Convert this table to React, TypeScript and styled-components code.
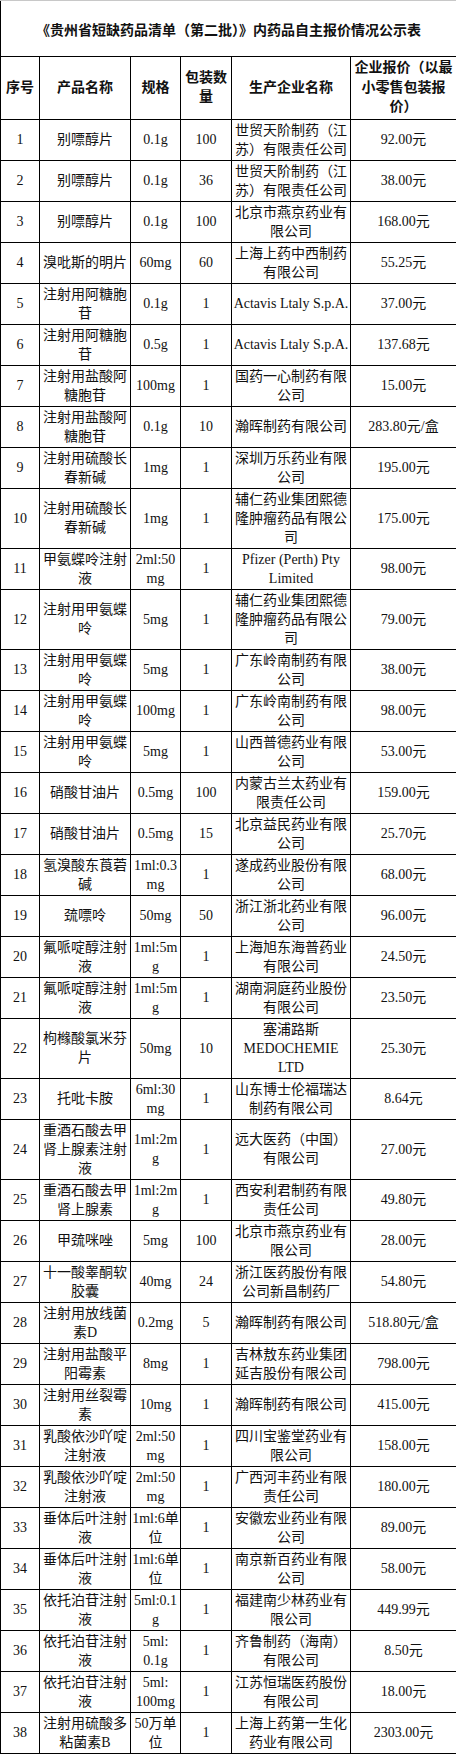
import styled, { createGlobalStyle } from 'styled-components';

const GlobalStyle = createGlobalStyle`
  html, body {
    margin: 0;
    padding: 0;
    background: #fff;
  }
  body {
    font-family: "Liberation Serif", "Noto Sans CJK SC", serif;
    color: #111;
  }
`;

const Sheet = styled.table`
  width: 456px;
  border-collapse: collapse;
  table-layout: fixed;
  border: 1px solid #000;
`;

const TitleCell = styled.th`
  border: 1px solid #000;
  border-top-color: #c8c8c8;
  padding: 19px 0 17px;
  font-family: "Noto Sans CJK SC", sans-serif;
  font-size: 14px;
  font-weight: bold;
  line-height: 19px;
  text-align: center;
`;

const HeadCell = styled.th`
  border: 1px solid #000;
  padding: 1px 1px 2px;
  font-family: "Liberation Serif", "Noto Sans CJK SC", serif;
  font-size: 14px;
  font-weight: bold;
  line-height: 19.5px;
  text-align: center;
  vertical-align: middle;
`;

const BodyCell = styled.td<{ $wrapAnywhere?: boolean }>`
  border: 1px solid #000;
  padding: 1px;
  font-size: 14px;
  line-height: 19px;
  text-align: center;
  vertical-align: middle;
  overflow-wrap: ${(p) => (p.$wrapAnywhere ? 'anywhere' : 'normal')};
`;

const widths = [39, 91, 50, 51, 119, 106];

const headers = ['序号', '产品名称', '规格', '包装数量', '生产企业名称', '企业报价（以最小零售包装报价）'];

const rows: string[][] = [
  ['1', '别嘌醇片', '0.1g', '100', '世贸天阶制药（江苏）有限责任公司', '92.00元'],
  ['2', '别嘌醇片', '0.1g', '36', '世贸天阶制药（江苏）有限责任公司', '38.00元'],
  ['3', '别嘌醇片', '0.1g', '100', '北京市燕京药业有限公司', '168.00元'],
  ['4', '溴吡斯的明片', '60mg', '60', '上海上药中西制药有限公司', '55.25元'],
  ['5', '注射用阿糖胞苷', '0.1g', '1', 'Actavis Ltaly S.p.A.', '37.00元'],
  ['6', '注射用阿糖胞苷', '0.5g', '1', 'Actavis Ltaly S.p.A.', '137.68元'],
  ['7', '注射用盐酸阿糖胞苷', '100mg', '1', '国药一心制药有限公司', '15.00元'],
  ['8', '注射用盐酸阿糖胞苷', '0.1g', '10', '瀚晖制药有限公司', '283.80元/盒'],
  ['9', '注射用硫酸长春新碱', '1mg', '1', '深圳万乐药业有限公司', '195.00元'],
  ['10', '注射用硫酸长春新碱', '1mg', '1', '辅仁药业集团熙德隆肿瘤药品有限公司', '175.00元'],
  ['11', '甲氨蝶呤注射液', '2ml:50mg', '1', 'Pfizer (Perth) Pty Limited', '98.00元'],
  ['12', '注射用甲氨蝶呤', '5mg', '1', '辅仁药业集团熙德隆肿瘤药品有限公司', '79.00元'],
  ['13', '注射用甲氨蝶呤', '5mg', '1', '广东岭南制药有限公司', '38.00元'],
  ['14', '注射用甲氨蝶呤', '100mg', '1', '广东岭南制药有限公司', '98.00元'],
  ['15', '注射用甲氨蝶呤', '5mg', '1', '山西普德药业有限公司', '53.00元'],
  ['16', '硝酸甘油片', '0.5mg', '100', '内蒙古兰太药业有限责任公司', '159.00元'],
  ['17', '硝酸甘油片', '0.5mg', '15', '北京益民药业有限公司', '25.70元'],
  ['18', '氢溴酸东莨菪碱', '1ml:0.3mg', '1', '遂成药业股份有限公司', '68.00元'],
  ['19', '巯嘌呤', '50mg', '50', '浙江浙北药业有限公司', '96.00元'],
  ['20', '氟哌啶醇注射液', '1ml:5mg', '1', '上海旭东海普药业有限公司', '24.50元'],
  ['21', '氟哌啶醇注射液', '1ml:5mg', '1', '湖南洞庭药业股份有限公司', '23.50元'],
  ['22', '枸橼酸氯米芬片', '50mg', '10', '塞浦路斯 MEDOCHEMIE LTD', '25.30元'],
  ['23', '托吡卡胺', '6ml:30mg', '1', '山东博士伦福瑞达制药有限公司', '8.64元'],
  ['24', '重酒石酸去甲肾上腺素注射液', '1ml:2mg', '1', '远大医药（中国）有限公司', '27.00元'],
  ['25', '重酒石酸去甲肾上腺素', '1ml:2mg', '1', '西安利君制药有限责任公司', '49.80元'],
  ['26', '甲巯咪唑', '5mg', '100', '北京市燕京药业有限公司', '28.00元'],
  ['27', '十一酸睾酮软胶囊', '40mg', '24', '浙江医药股份有限公司新昌制药厂', '54.80元'],
  ['28', '注射用放线菌素D', '0.2mg', '5', '瀚晖制药有限公司', '518.80元/盒'],
  ['29', '注射用盐酸平阳霉素', '8mg', '1', '吉林敖东药业集团延吉股份有限公司', '798.00元'],
  ['30', '注射用丝裂霉素', '10mg', '1', '瀚晖制药有限公司', '415.00元'],
  ['31', '乳酸依沙吖啶注射液', '2ml:50mg', '1', '四川宝鉴堂药业有限公司', '158.00元'],
  ['32', '乳酸依沙吖啶注射液', '2ml:50mg', '1', '广西河丰药业有限责任公司', '180.00元'],
  ['33', '垂体后叶注射液', '1ml:6单位', '1', '安徽宏业药业有限公司', '89.00元'],
  ['34', '垂体后叶注射液', '1ml:6单位', '1', '南京新百药业有限公司', '58.00元'],
  ['35', '依托泊苷注射液', '5ml:0.1g', '1', '福建南少林药业有限公司', '449.99元'],
  ['36', '依托泊苷注射液', '5ml: 0.1g', '1', '齐鲁制药（海南）有限公司', '8.50元'],
  ['37', '依托泊苷注射液', '5ml: 100mg', '1', '江苏恒瑞医药股份有限公司', '18.00元'],
  ['38', '注射用硫酸多粘菌素B', '50万单位', '1', '上海上药第一生化药业有限公司', '2303.00元'],
];

function PriceTable() {
  return (
    <Sheet>
      <colgroup>
        {widths.map((w, i) => (
          <col key={i} style={{ width: w }} />
        ))}
      </colgroup>
      <thead>
        <tr>
          <TitleCell colSpan={6}>《贵州省短缺药品清单（第二批）》内药品自主报价情况公示表</TitleCell>
        </tr>
        <tr>
          {headers.map((h) => (
            <HeadCell key={h}>{h}</HeadCell>
          ))}
        </tr>
      </thead>
      <tbody>
        {rows.map((r) => (
          <tr key={r[0]}>
            {r.map((cell, i) => (
              <BodyCell key={i} $wrapAnywhere={i === 2}>
                {cell}
              </BodyCell>
            ))}
          </tr>
        ))}
      </tbody>
    </Sheet>
  );
}

export default function App() {
  return (
    <>
      <GlobalStyle />
      <PriceTable />
    </>
  );
}
